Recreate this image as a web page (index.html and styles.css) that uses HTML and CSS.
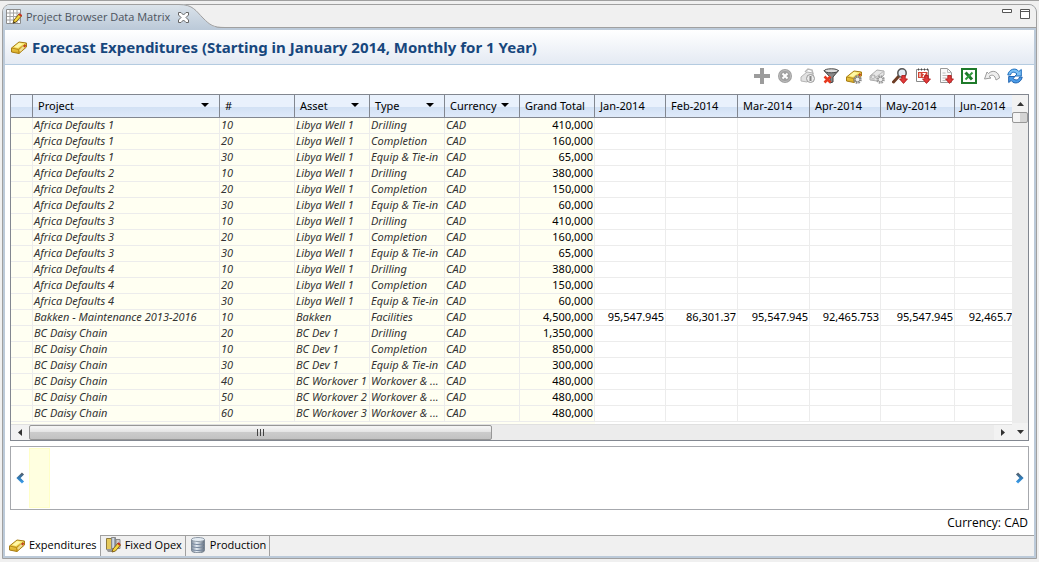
FILE: index.html
```html
<!DOCTYPE html>
<html lang="en">
<head>
<meta charset="utf-8">
<title>Project Browser Data Matrix</title>
<link rel="stylesheet" href="styles.css">
</head>
<body>
<svg class="defs" aria-hidden="true">
  <defs>
    <linearGradient id="gold" x1="0" y1="0" x2="0" y2="1"><stop offset="0" stop-color="#fff27c"/><stop offset="1" stop-color="#d9a820"/></linearGradient>
    <linearGradient id="tabfill" x1="0" y1="0" x2="0" y2="1"><stop offset="0" stop-color="#dbe3ea"/><stop offset="1" stop-color="#bccad9"/></linearGradient>
    <linearGradient id="steel" x1="0" y1="0" x2="1" y2="0"><stop offset="0" stop-color="#7d8a99"/><stop offset=".4" stop-color="#e6eef6"/><stop offset="1" stop-color="#5e6a78"/></linearGradient>
    <linearGradient id="azure" x1="0" y1="0" x2="0" y2="1"><stop offset="0" stop-color="#55606c"/><stop offset=".5" stop-color="#2d7ab8"/><stop offset="1" stop-color="#3c9be8"/></linearGradient>
  </defs>
  <symbol id="bar" viewBox="0 0 16 16">
    <path d="M.5 9L8 3l7.500 1v4L8 14.500.5 13z" fill="url(#gold)" stroke="#a67c14" stroke-linejoin="round"/>
    <path d="M.5 9l7 1.500L15 4.500M7.500 10.500l.5 4" fill="none" stroke="#b78a18"/>
    <path d="M3 8l5-4 4 1-5 4z" fill="#fff8a6"/>
    <path d="M9 12l4-4.500" stroke="#f0dc94" stroke-width="2"/>
    <path d="M13 8l1.500-2" stroke="#c43a22" stroke-width="2"/>
  </symbol>
  <symbol id="cog" viewBox="0 0 9 9">
    <circle cx="4.500" cy="4.500" r="3.200" fill="none" stroke="currentColor" stroke-width="2.200" stroke-dasharray="1.600 .9"/>
    <circle cx="4.500" cy="4.500" r="2.300" fill="#eee" stroke="currentColor"/>
  </symbol>
  <symbol id="down" viewBox="0 0 8 8"><path d="M2.500.5h3v3h2L4 7.500.5 3.500h2z" fill="#e03a3a" stroke="#b01c1c" stroke-width=".8" stroke-linejoin="round"/></symbol>
</svg>

<div class="workbench">
<main class="view">
  <header class="view-head">
    <div class="view-tab">
      <svg class="icon" viewBox="0 0 16 16"><path d="M.5.5h14v14H.5z" fill="#fff" stroke="#8c8c8c"/><path d="M1 4h13M1 7.500h13M1 11h13M4 1v13M7.500 1v13M11 1v13" stroke="#a4a4a4"/><path d="M7 14l1-3 5-6 2.500 2-5.500 6z" fill="#f5d73c" stroke="#7c5b14"/><path d="M13 5l2.500 2" stroke="#c63222" stroke-width="2"/><path d="M7 14.500l1-2 1.500 1z" fill="#333"/></svg>
      <span>Project Browser Data Matrix</span>
      <button class="plain close" aria-label="Close view"><svg width="11" height="11" viewBox="0 0 11 11"><path d="M.5.5h2.500l2.500 2.500L8 .5h2.500V3L8 5.500 10.500 8v2.500H8L5.500 8 3 10.500H.5V8L3 5.500.5 3z" fill="#fff" stroke="#666"/></svg></button>
      <svg class="tab-tail" width="46" height="25" viewBox="0 0 46 25" aria-hidden="true"><path d="M0 0C14 0 17 7 24 14S34 24 46 24v1H0z" fill="url(#tabfill)"/><path d="M0 .5C14 .5 17 7 24 14S34 23.500 46 23.500" fill="none" stroke="#a0a0a0"/></svg>
    </div>
    <div class="view-buttons">
      <button class="plain" aria-label="Minimize"><svg width="10" height="10" viewBox="0 0 10 10"><path d="M.5.500h9v3h-9z" fill="#fff" stroke="#555"/></svg></button>
      <button class="plain" aria-label="Maximize"><svg width="10" height="10" viewBox="0 0 10 10"><path d="M.5.500h9v9h-9zM.5 2.500h9" fill="#fff" stroke="#555"/></svg></button>
    </div>
  </header>

  <div class="view-body">
    <div class="title-bar">
      <svg class="icon"><use href="#bar"/></svg>
      <h1>Forecast Expenditures (Starting in January 2014, Monthly for 1 Year)</h1>
    </div>

    <div class="toolbar" role="toolbar">
      <button class="plain" aria-label="Add"><svg class="icon" viewBox="0 0 16 16"><path d="M6 0h4v6h6v4h-6v6H6v-6H0V6h6z" fill="#9c9c9c"/></svg></button>
      <button class="plain" aria-label="Delete"><svg class="icon" viewBox="0 0 16 16"><circle cx="8" cy="8" r="7" fill="#a0a0a0"/><circle cx="8" cy="8" r="5.500" fill="none" stroke="#bcbcbc"/><path d="M5.500 5.500l5 5m0-5l-5 5" stroke="#fff" stroke-width="2"/></svg></button>
      <button class="plain" aria-label="Lock"><svg class="icon" viewBox="0 0 16 16"><path d="M1 9l6-5 6 1v4l-6 5-6-1z" fill="#e2e2e2" stroke="#b4b4b4"/><path d="M5 4l3-3 4 1 1 4" fill="none" stroke="#b8b8b8" stroke-width="1.500"/><circle cx="10.500" cy="10.500" r="4" fill="#ececec" stroke="#999"/><path d="M10.500 8v5" stroke="#888" stroke-width="2"/></svg></button>
      <button class="plain" aria-label="Clear filter"><svg class="icon" viewBox="0 0 16 16"><path d="M1 2.500L7 9v6l3-1V9l5.500-6.500z" fill="#888" stroke="#444"/><ellipse cx="8.300" cy="2.800" rx="7" ry="2" fill="#ddd" stroke="#444"/><path d="M1.500 8.500l6 6m0-6l-6 6" stroke="#e8391f" stroke-width="2.500"/></svg></button>
      <button class="plain" aria-label="Expenditure settings"><svg class="icon" viewBox="0 0 16 16"><use href="#bar"/><use href="#cog" x="7" y="7" width="9" height="9" color="#888"/></svg></button>
      <button class="plain" aria-label="Settings"><svg class="icon" viewBox="0 0 16 16"><path d="M1 8l7-6 7 1v4l-7 6-7-1z" fill="#e6e6e6" stroke="#adadad"/><path d="M1 8l6 1 8-6" fill="none" stroke="#bbb"/><use href="#cog" x="1" y="6" width="6" height="6" color="#b0b0b0"/><use href="#cog" x="7" y="7" width="9" height="9" color="#9c9c9c"/></svg></button>
      <button class="plain" aria-label="Find"><svg class="icon" viewBox="0 0 16 16"><path d="M1.500 14L7 8" stroke="#6e3d24" stroke-width="3" stroke-linecap="round"/><circle cx="10" cy="5" r="4.200" fill="#e4eef6" stroke="#555" stroke-width="1.500"/><use href="#down" x="7" y="7" width="9" height="9"/></svg></button>
      <button class="plain" aria-label="Schedule"><svg class="icon" viewBox="0 0 16 16"><path d="M1.500 1.500h12v12h-12z" fill="#fff" stroke="#888"/><path d="M3.500.5v2m3-2v2m3-2v2m3-2v2" stroke="#444"/><path d="M3 4h9.500v6H3z" fill="#d44434"/><path d="M5 5v4M7.500 5.500H10L8 9" fill="none" stroke="#fff" stroke-width="1.200"/><use href="#down" x="7" y="7" width="9" height="9"/></svg></button>
      <button class="plain" aria-label="Export report"><svg class="icon" viewBox="0 0 16 16"><path d="M2.500.5h7l4 4v10h-11z" fill="#fafafa" stroke="#999"/><path d="M9.500.5v4h4M4.500 5h3m-3 2.500h6m-6 2.500h4m-4 2.500h4" fill="none" stroke="#bbb"/><use href="#down" x="7" y="7" width="9" height="9"/></svg></button>
      <button class="plain" aria-label="Export to Excel"><svg class="icon" viewBox="0 0 16 16"><path d="M1 1h14v14H1z" fill="#fff" stroke="#1e7a2a" stroke-width="2"/><path d="M4.500 4.500l6.500 7" stroke="#1e7a2a" stroke-width="3"/><path d="M11.500 4.500l-7 7" stroke="#2f9a3c" stroke-width="2"/></svg></button>
      <button class="plain" aria-label="Undo"><svg class="icon" viewBox="0 0 16 16"><path d="M3 4L.5 11l6.500-1-2-1.500C8 6 11 7 12 12l3.500-2C15 4 9 1 4.500 5.500z" fill="#eee" stroke="#9c9c9c" stroke-linejoin="round"/></svg></button>
      <button class="plain" aria-label="Refresh"><svg class="icon" viewBox="0 0 16 16"><path d="M.8 7c1-6 8-8 11-3.500l2.500-2V8H8l2-2C7 3 4 4 3.500 7z" fill="#7cc0f4" stroke="#1f6fbe"/><path d="M15.200 9c-1 6-8 8-11 3.500l-2.500 2V8.500H8l-2 2c3 2.500 6 1.500 6.500-1.500z" fill="#4c9ce8" stroke="#1f62ae"/></svg></button>
    </div>

    <section class="grid">
      <div class="grid-main">
        <div class="grid-clip">
          <table>
            <colgroup><col class="c-mark"><col class="c-project"><col class="c-std"><col class="c-std"><col class="c-std"><col class="c-std"><col class="c-std"><col class="c-month-narrow"><col class="c-month"><col class="c-month"><col class="c-month-narrow"><col class="c-month-wide"><col class="c-month"></colgroup>
            <thead>
              <tr>
                <th></th>
                <th><button class="sort">Project<i></i></button></th>
                <th>#</th>
                <th><button class="sort">Asset<i></i></button></th>
                <th><button class="sort">Type<i></i></button></th>
                <th><button class="sort">Currency<i></i></button></th>
                <th>Grand Total</th>
                <th>Jan-2014</th><th>Feb-2014</th><th>Mar-2014</th><th>Apr-2014</th><th>May-2014</th><th>Jun-2014</th>
              </tr>
            </thead>
            <tbody>
              <tr><td><td>Africa Defaults 1<td>10<td>Libya Well 1<td>Drilling<td>CAD<td>410,000<td><td><td><td><td><td></tr>
              <tr><td><td>Africa Defaults 1<td>20<td>Libya Well 1<td>Completion<td>CAD<td>160,000<td><td><td><td><td><td></tr>
              <tr><td><td>Africa Defaults 1<td>30<td>Libya Well 1<td>Equip &amp; Tie-in<td>CAD<td>65,000<td><td><td><td><td><td></tr>
              <tr><td><td>Africa Defaults 2<td>10<td>Libya Well 1<td>Drilling<td>CAD<td>380,000<td><td><td><td><td><td></tr>
              <tr><td><td>Africa Defaults 2<td>20<td>Libya Well 1<td>Completion<td>CAD<td>150,000<td><td><td><td><td><td></tr>
              <tr><td><td>Africa Defaults 2<td>30<td>Libya Well 1<td>Equip &amp; Tie-in<td>CAD<td>60,000<td><td><td><td><td><td></tr>
              <tr><td><td>Africa Defaults 3<td>10<td>Libya Well 1<td>Drilling<td>CAD<td>410,000<td><td><td><td><td><td></tr>
              <tr><td><td>Africa Defaults 3<td>20<td>Libya Well 1<td>Completion<td>CAD<td>160,000<td><td><td><td><td><td></tr>
              <tr><td><td>Africa Defaults 3<td>30<td>Libya Well 1<td>Equip &amp; Tie-in<td>CAD<td>65,000<td><td><td><td><td><td></tr>
              <tr><td><td>Africa Defaults 4<td>10<td>Libya Well 1<td>Drilling<td>CAD<td>380,000<td><td><td><td><td><td></tr>
              <tr><td><td>Africa Defaults 4<td>20<td>Libya Well 1<td>Completion<td>CAD<td>150,000<td><td><td><td><td><td></tr>
              <tr><td><td>Africa Defaults 4<td>30<td>Libya Well 1<td>Equip &amp; Tie-in<td>CAD<td>60,000<td><td><td><td><td><td></tr>
              <tr><td><td>Bakken - Maintenance 2013-2016<td>10<td>Bakken<td>Facilities<td>CAD<td>4,500,000<td>95,547.945<td>86,301.37<td>95,547.945<td>92,465.753<td>95,547.945<td>92,465.753</tr>
              <tr><td><td>BC Daisy Chain<td>20<td>BC Dev 1<td>Drilling<td>CAD<td>1,350,000<td><td><td><td><td><td></tr>
              <tr><td><td>BC Daisy Chain<td>10<td>BC Dev 1<td>Completion<td>CAD<td>850,000<td><td><td><td><td><td></tr>
              <tr><td><td>BC Daisy Chain<td>30<td>BC Dev 1<td>Equip &amp; Tie-in<td>CAD<td>300,000<td><td><td><td><td><td></tr>
              <tr><td><td>BC Daisy Chain<td>40<td>BC Workover 1<td>Workover &amp; ...<td>CAD<td>480,000<td><td><td><td><td><td></tr>
              <tr><td><td>BC Daisy Chain<td>50<td>BC Workover 2<td>Workover &amp; ...<td>CAD<td>480,000<td><td><td><td><td><td></tr>
              <tr><td><td>BC Daisy Chain<td>60<td>BC Workover 3<td>Workover &amp; ...<td>CAD<td>480,000<td><td><td><td><td><td></tr>
            </tbody>
          </table>
        </div>
        <div class="hscroll">
          <button class="arrow" aria-label="Scroll left"><svg width="4" height="7" viewBox="0 0 4 7"><path d="M4 0v7L0 3.500z"/></svg></button>
          <div class="track"><div class="thumb"><svg width="9" height="7" viewBox="0 0 9 7"><path d="M1.500 0v7M4.500 0v7M7.500 0v7" stroke="#444"/></svg></div></div>
          <button class="arrow" aria-label="Scroll right"><svg width="4" height="7" viewBox="0 0 4 7"><path d="M0 0v7l4-3.500z"/></svg></button>
        </div>
      </div>
      <div class="vscroll">
        <button class="arrow" aria-label="Scroll up"><svg width="7" height="4" viewBox="0 0 7 4"><path d="M0 4h7L3.500 0z"/></svg></button>
        <div class="vtrack"><div class="vthumb"></div></div>
        <button class="arrow" aria-label="Scroll down"><svg width="7" height="4" viewBox="0 0 7 4"><path d="M0 0h7L3.500 4z"/></svg></button>
      </div>
    </section>

    <section class="timeline">
      <button class="plain step" aria-label="Previous"><svg width="9" height="12" viewBox="0 0 9 12"><path d="M7 1.500L2.500 6 7 10.500" fill="none" stroke="url(#azure)" stroke-width="3"/></svg></button>
      <div class="period"></div>
      <button class="plain step" aria-label="Next"><svg width="9" height="12" viewBox="0 0 9 12"><path d="M2 1.500L6.500 6 2 10.500" fill="none" stroke="url(#azure)" stroke-width="3"/></svg></button>
    </section>
    <p class="currency">Currency: CAD</p>

    <nav class="page-tabs">
      <button class="page-tab active"><svg class="icon"><use href="#bar"/></svg>Expenditures</button>
      <button class="page-tab"><svg class="icon" viewBox="0 0 16 16"><path d="M1.500 1.500h5v11h-5z" fill="#e5c95c" stroke="#8d7a3c"/><path d="M6.500.5h4v11h-4z" fill="url(#steel)" stroke="#888"/><path d="M11 2.500h4v9h-4z" fill="#ccc" stroke="#888"/><path d="M1 12h8v3H3z" fill="#999"/><path d="M7 15l1-3 5-6 2.500 2-5 6z" fill="#f5d73c" stroke="#80601a"/><path d="M13 6l2 2" stroke="#c63222" stroke-width="2"/></svg>Fixed Opex</button>
      <button class="page-tab"><svg class="icon" viewBox="0 0 16 16"><path d="M1.500 2.500v11c0 3 13 3 13 0v-11z" fill="url(#steel)" stroke="#7b8794"/><ellipse cx="8" cy="2.500" rx="6.500" ry="2" fill="#e4ecf3" stroke="#8f9ba8"/><path d="M2 6c0 2 12 2 12 0M2 9c0 2 12 2 12 0M2 12c0 2 12 2 12 0" fill="none" stroke="#7889a0"/></svg>Production</button>
    </nav>
  </div>
</main>
</div>
</body>
</html>
```
FILE: styles.css
```css
* { box-sizing: border-box; }

body {
  margin: 0;
  background: #f0f0f0;
  color: #000;
  font: 12px/16px "Open Sans", "Noto Sans", sans-serif;
}

button {
  margin: 0;
  padding: 0;
  border: 0;
  background: none;
  color: inherit;
  font: inherit;
}

.defs { position: absolute; width: 0; height: 0; }
.plain { display: flex; flex: none; align-items: center; justify-content: center; }
.icon { display: block; flex: none; width: 16px; height: 16px; }

.workbench {
  display: flex;
  min-height: 100vh;
  padding: 3px 2px;
  border-top: 1px solid #a0a0a0;
}

.view {
  flex: 1;
  display: flex;
  flex-direction: column;
  min-width: 0;
  border: 1px solid #a0a0a0;
  border-radius: 8px 8px 0 0;
  background: #bccad9;
}

.view-head {
  display: flex;
  justify-content: space-between;
  height: 23px;
  border-bottom: 1px solid #a0a0a0;
  border-radius: 7px 7px 0 0;
  background: #f0f0f0;
}

.view-tab {
  display: flex;
  align-items: center;
  gap: 4px;
  height: 24px;
  padding-left: 3px;
  border-radius: 7px 0 0 0;
  background: linear-gradient(#dbe3ea, #bccad9) no-repeat 0 0 / calc(100% - 46px) 100%;
  color: #4c535c;
  font-size: 11px;
}

.close { position: relative; z-index: 1; margin-left: 4px; }
.tab-tail { flex: none; margin: -1px 0 0 -14px; }
.view-buttons { display: flex; gap: 8px; padding: 4px 6px 0 0; height: 14px; }

.view-body {
  flex: 1;
  display: flex;
  flex-direction: column;
  min-width: 0;
  margin: 2px;
  background: #fff;
}

.title-bar {
  display: flex;
  align-items: center;
  gap: 5px;
  height: 35px;
  padding-left: 6px;
  border-bottom: 1px solid #b4cbe0;
  background: linear-gradient(#fff, #e4eaf3);
}

h1 {
  margin: 0;
  color: #17477d;
  font: bold 15px/20px "Noto Sans", sans-serif;
}

.toolbar {
  display: flex;
  justify-content: flex-end;
  gap: 7px;
  padding: 3px 11px 10px 0;
}

.grid {
  display: flex;
  margin: 0 5px;
  border: 1px solid #828790;
  font: 11px/13px "Noto Sans", sans-serif;
}

.grid-main { flex: 1; min-width: 0; }
.grid-clip { overflow: hidden; padding-bottom: 2px; background: linear-gradient(90deg, #fffff2 584px, #fff 584px); }

table { width: 1016px; table-layout: fixed; border-collapse: separate; border-spacing: 0; }
.c-mark { width: 22px; }
.c-project { width: 187px; }
.c-std { width: 75px; }
.c-month { width: 72px; }
.c-month-narrow { width: 71px; }
.c-month-wide { width: 74px; }

th {
  height: 23px;
  padding: 0 5px 2px;
  border-right: 1px solid #828790;
  border-bottom: 1px solid #828790;
  background: linear-gradient(#e9f1fc 0 55%, #d2e1f4 55%, #dfeafa);
  font-weight: normal;
  text-align: left;
  white-space: nowrap;
}

.sort { display: flex; align-items: center; justify-content: space-between; width: 100%; padding-right: 5px; }
.sort i { border: 4px solid transparent; border-top-color: #000; border-bottom: 0; }

td {
  height: 16px;
  padding: 0 1px 2px;
  border-right: 1px solid #ececec;
  border-bottom: 1px solid #ececec;
  overflow: hidden;
  text-align: right;
  vertical-align: top;
  white-space: nowrap;
}

td:nth-child(-n+6) {
  color: #333;
  font-style: italic;
  text-align: left;
}

.hscroll, .vscroll { display: flex; background: #ececec; }
.hscroll { height: 16px; border-top: 1px solid #e0e0e0; }
.vscroll { flex-direction: column; width: 16px; }
.arrow { display: flex; align-items: center; justify-content: center; flex: none; width: 18px; height: 15px; background: #f2f2f2; }
.vscroll .arrow { width: 16px; height: 17px; }
.arrow path { fill: #333; }
.track, .vtrack { flex: 1; display: flex; }

.thumb, .vthumb {
  display: flex;
  align-items: center;
  justify-content: center;
  border: 1px solid #979797;
  border-radius: 2px;
}

.thumb { width: 48%; background: linear-gradient(#f4f4f4 0 10%, #e4e4e4 45%, #cbcbcb 50%, #c2c2c2); }
.vthumb { width: 16px; height: 11px; background: linear-gradient(90deg, #f4f4f4 50%, #d4d4d4 50%); }

.timeline {
  display: flex;
  justify-content: space-between;
  height: 64px;
  margin: 5px 5px 0;
  padding: 1px 0;
  border: 1px solid #a6a8ad;
}

.step { width: 18px; }
.period { width: 21px; margin-right: auto; border: 1px solid #ffffc8; background: #ffffe0; }

.currency { margin: 5px 6px 4px; text-align: right; }

.page-tabs {
  display: flex;
  margin-top: auto;
  height: 21px;
  border-top: 1px solid #a0a0a0;
  background: #f0f0f0;
  font-size: 11px;
}

.page-tab { display: flex; align-items: center; gap: 4px; padding: 0 3px 2px 4px; border-right: 1px solid #a0a0a0; }
.page-tab.active { margin-top: -1px; background: #fff; }
```
